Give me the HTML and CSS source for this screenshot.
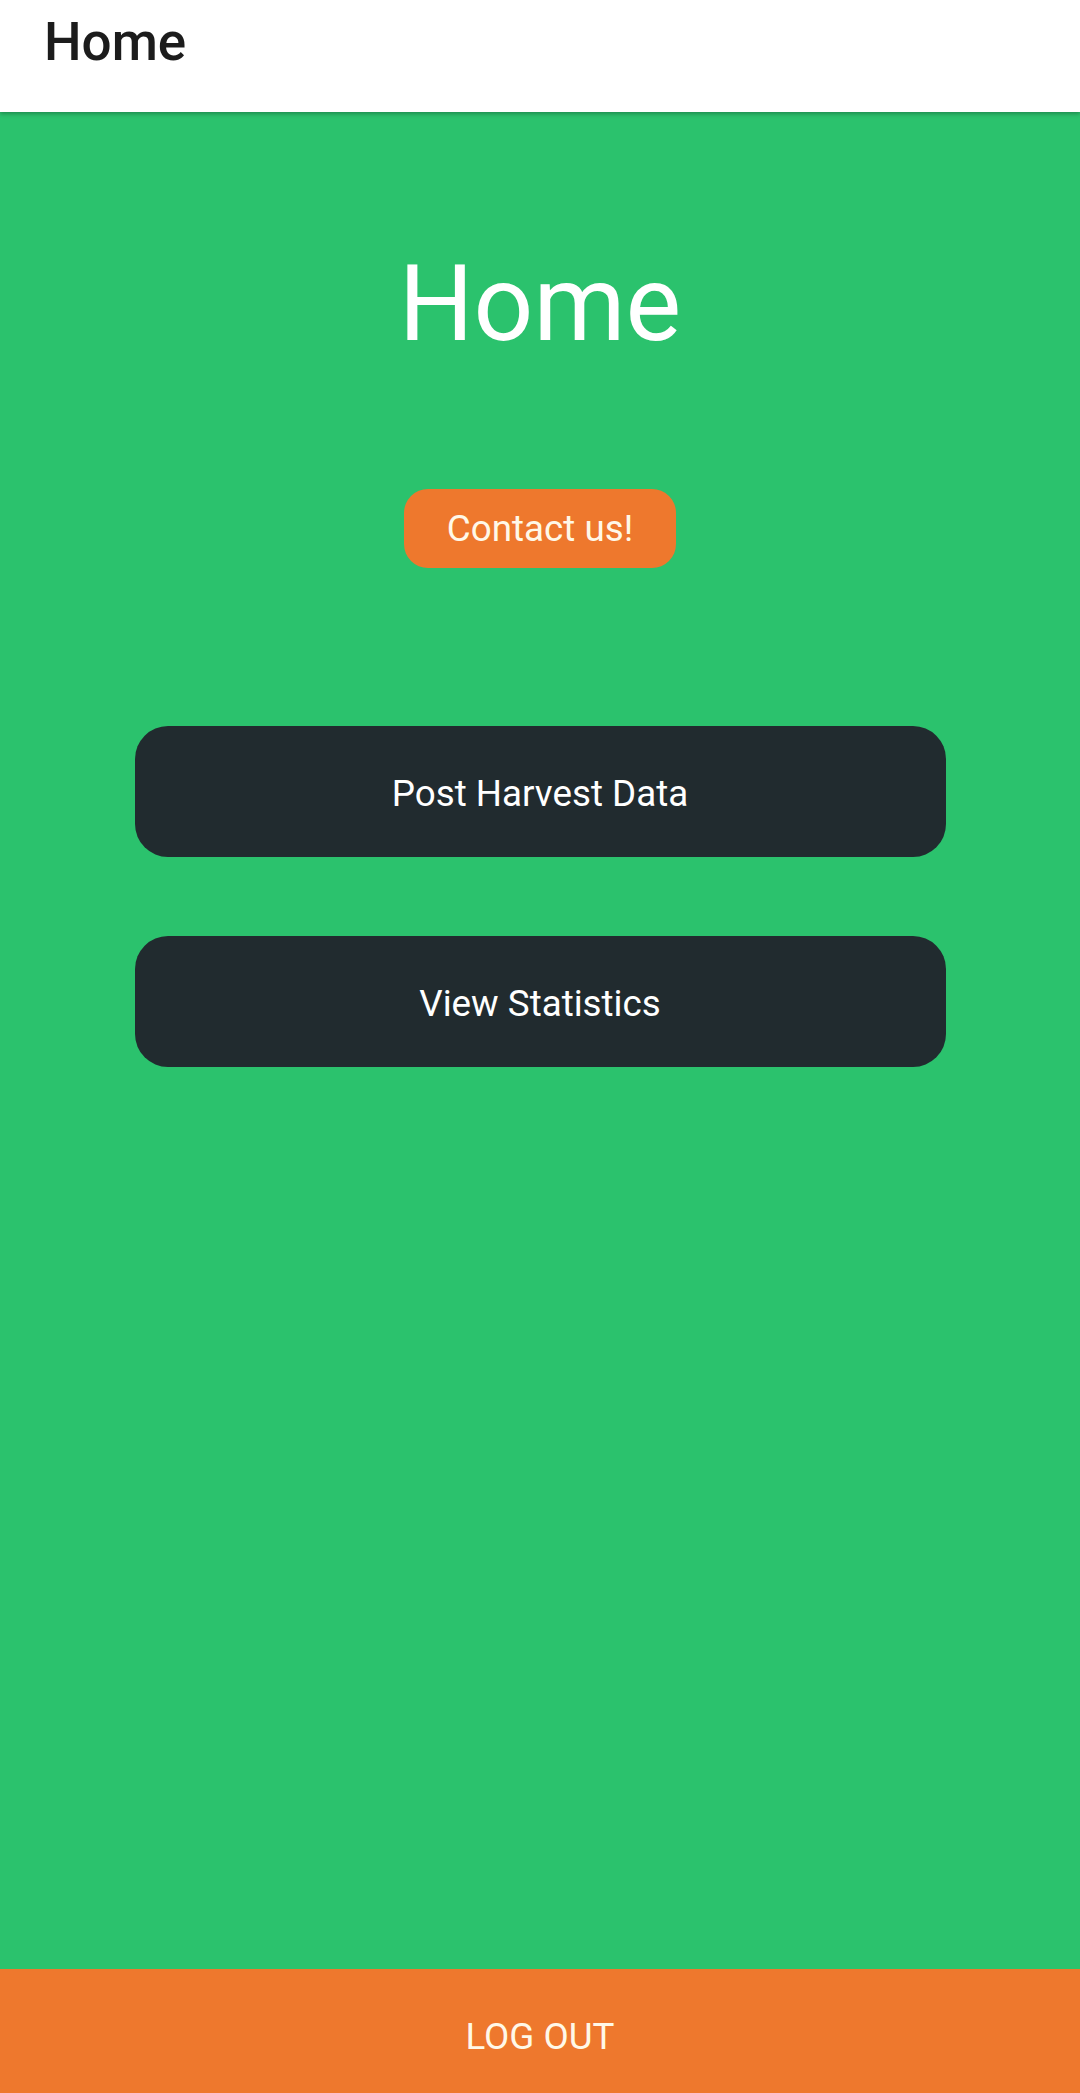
FILE: index.html
```html
<!DOCTYPE html>
<html lang="en">
<head>
<meta charset="utf-8">
<title>Home</title>
<link rel="stylesheet" href="styles.css">
</head>
<body>
<div class="app">
  <header class="appbar">
    <h1 class="appbar-title">Home</h1>
  </header>
  <main class="content">
    <h2 class="page-title">Home</h2>
    <button class="contact-btn">Contact us!</button>
    <div class="actions">
      <button class="action-btn">Post Harvest Data</button>
      <button class="action-btn">View Statistics</button>
    </div>
  </main>
  <button class="logout">LOG OUT</button>
</div>
</body>
</html>
```
FILE: styles.css
```css
html, body {
  margin: 0;
  padding: 0;
}
body {
  font-family: Roboto, "Noto Sans", "Liberation Sans", sans-serif;
  background: #2bc26d;
}
.app {
  display: flex;
  flex-direction: column;
  height: 2093px;
  width: 1080px;
  overflow: hidden;
}
.appbar {
  height: 112px;
  background: #ffffff;
  box-shadow: 0 2px 4px rgba(0, 0, 0, 0.28);
  position: relative;
  z-index: 1;
  flex: none;
}
.appbar-title {
  margin: 0;
  padding: 10px 0 0 44px;
  font-size: 53px;
  line-height: 64px;
  font-weight: 500;
  color: #1c1c1c;
}
.content {
  flex: 1;
  background: #2bc26d;
  display: flex;
  flex-direction: column;
  align-items: center;
  padding-top: 140px;
}
.page-title {
  margin: 0;
  font-size: 105px;
  line-height: 105px;
  font-weight: 400;
  color: #ffffff;
}
.contact-btn {
  margin-top: 132px;
  height: 79px;
  padding: 0 43px;
  border: none;
  border-radius: 24px;
  background: #ee782d;
  color: #fff8e8;
  font-family: inherit;
  font-size: 36.75px;
  font-weight: 400;
}
.actions {
  margin-top: 158px;
  display: flex;
  flex-direction: column;
  gap: 79px;
  width: 811px;
}
.action-btn {
  height: 131px;
  padding: 3px 0 0;
  border: none;
  border-radius: 33px;
  background: #212b2f;
  color: #ffffff;
  font-family: inherit;
  font-size: 36.75px;
  font-weight: 400;
}
.logout {
  flex: none;
  height: 124px;
  padding: 11px 0 0;
  border: none;
  background: #ee782d;
  color: #fff8e8;
  font-family: inherit;
  font-size: 36.75px;
  font-weight: 400;
  text-transform: uppercase;
}
```
